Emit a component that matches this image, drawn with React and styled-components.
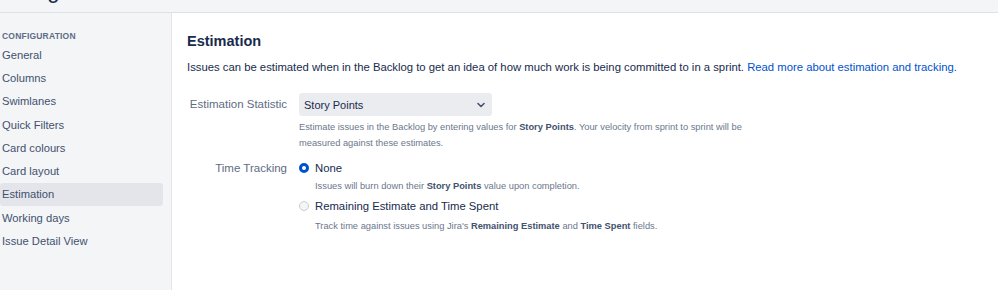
import React from 'react'
import styled, { createGlobalStyle } from 'styled-components'

const GlobalStyle = createGlobalStyle`
    html, body {
        margin: 0;
        padding: 0;
        background: #ffffff;
        font-family: "Liberation Sans", Arial, sans-serif;
        color: #172b4d;
    }
`

const Page = styled.div`
    width: 998px;
    height: 290px;
    display: flex;
    flex-direction: column;
    overflow: hidden;
`
const TopBar = styled.div`
    height: 12px;
    flex-shrink: 0;
    background-color: #f4f5f7;
    border-bottom: 1px solid #dfe1e6;
    overflow: hidden;
    display: flex;
    align-items: flex-end;
`
const PageTitle = styled.h1`
    margin: 0 0 10px -4px;
    font-size: 22px;
    line-height: 22px;
    font-weight: 500;
    color: #172b4d;
    white-space: nowrap;
`
const Body = styled.div`
    flex: 1;
    display: flex;
`
const Sidebar = styled.nav`
    width: 172px;
    flex-shrink: 0;
    background-color: #f4f5f7;
    border-right: 1px solid #e4e6ea;
    padding: 18px 8px 0 0;
    box-sizing: border-box;
`
const SectionTitle = styled.div`
    font-size: 8.5px;
    font-weight: 700;
    color: #5e6c84;
    letter-spacing: 0.2px;
    padding-left: 2px;
    margin-bottom: 2px;
`
const NavList = styled.ul`
    list-style: none;
    margin: 0;
    padding: 0;
`
const NavItem = styled.li`
    height: 23.3px;
    display: flex;
    align-items: center;
    padding-left: 2px;
    font-size: 11.2px;
    color: #42526e;
    border-radius: 3px;
    background-color: ${props => props.active ? '#e4e5ea' : 'transparent'};
`
const Content = styled.main`
    flex: 1;
    padding: 18px 0 0 15px;
`
const Heading = styled.h2`
    margin: 0;
    font-size: 14.5px;
    line-height: 20px;
    font-weight: 600;
    color: #172b4d;
`
const Intro = styled.p`
    margin: 8px 0 0;
    font-size: 11.3px;
    line-height: 16px;
    color: #172b4d;
`
const Link = styled.a`
    color: #0052cc;
    text-decoration: none;
`
const Form = styled.div`
    margin-top: 18px;
    display: grid;
    grid-template-columns: 100px 1fr;
    column-gap: 12px;
    row-gap: 7px;
`
const Label = styled.div`
    text-align: right;
    font-size: 11.5px;
    color: #5e6c84;
    line-height: ${props => props.lh || 23}px;
    white-space: nowrap;
`
const Field = styled.div`
    display: flex;
    flex-direction: column;
`
const Select = styled.div`
    width: 193px;
    height: 23px;
    box-sizing: border-box;
    background-color: #ebecf0;
    border-radius: 3px;
    display: flex;
    align-items: center;
    justify-content: space-between;
    padding: 0 6px 0 5px;
    font-size: 11px;
    color: #172b4d;
`
const Help = styled.div`
    font-size: 9.3px;
    line-height: 16px;
    color: #6b778c;
    margin-top: ${props => props.top || 0}px;
    margin-left: ${props => props.indent ? 16 : 0}px;
    max-width: 446px;
    b {
        font-weight: 700;
        color: #42526e;
    }
`
const RadioRow = styled.label`
    display: flex;
    align-items: center;
    gap: 6px;
    height: 20px;
    margin-top: ${props => props.top || 0}px;
    font-size: 11.3px;
    color: #172b4d;
`
const RadioDot = styled.span`
    width: 10px;
    height: 10px;
    box-sizing: border-box;
    border-radius: 50%;
    background-color: ${props => props.checked ? '#ffffff' : '#f4f5f7'};
    border: ${props => props.checked ? '3px solid #0052cc' : '1px solid #c9ced6'};
`

const Chevron = () => (
    <svg width="10" height="10" viewBox="0 0 10 10">
        <path d="M2 3.5 L5 6.5 L8 3.5" fill="none" stroke="#42526e" strokeWidth="1.6" strokeLinecap="round" strokeLinejoin="round" />
    </svg>
)

const navItems = ['General', 'Columns', 'Swimlanes', 'Quick Filters', 'Card colours', 'Card layout', 'Estimation', 'Working days', 'Issue Detail View']

const App = () => {
    return (
        <Page>
            <GlobalStyle />
            <TopBar>
                <PageTitle>Configure Board</PageTitle>
            </TopBar>
            <Body>
                <Sidebar>
                    <SectionTitle>CONFIGURATION</SectionTitle>
                    <NavList>
                        {navItems.map(item => (
                            <NavItem key={item} active={item === 'Estimation'}>{item}</NavItem>
                        ))}
                    </NavList>
                </Sidebar>
                <Content>
                    <Heading>Estimation</Heading>
                    <Intro>
                        Issues can be estimated when in the Backlog to get an idea of how much work is being committed to in a sprint. <Link href="#">Read more about estimation and tracking.</Link>
                    </Intro>
                    <Form>
                        <Label>Estimation Statistic</Label>
                        <Field>
                            <Select>
                                <span>Story Points</span>
                                <Chevron />
                            </Select>
                            <Help top={3}>
                                Estimate issues in the Backlog by entering values for <b>Story Points</b>. Your velocity from sprint to sprint will be measured against these estimates.
                            </Help>
                        </Field>
                        <Label lh={20}>Time Tracking</Label>
                        <Field>
                            <RadioRow>
                                <RadioDot checked />
                                None
                            </RadioRow>
                            <Help indent>
                                Issues will burn down their <b>Story Points</b> value upon completion.
                            </Help>
                            <RadioRow top={2}>
                                <RadioDot />
                                Remaining Estimate and Time Spent
                            </RadioRow>
                            <Help indent top={2}>
                                Track time against issues using Jira's <b>Remaining Estimate</b> and <b>Time Spent</b> fields.
                            </Help>
                        </Field>
                    </Form>
                </Content>
            </Body>
        </Page>
    )
}

export default App
